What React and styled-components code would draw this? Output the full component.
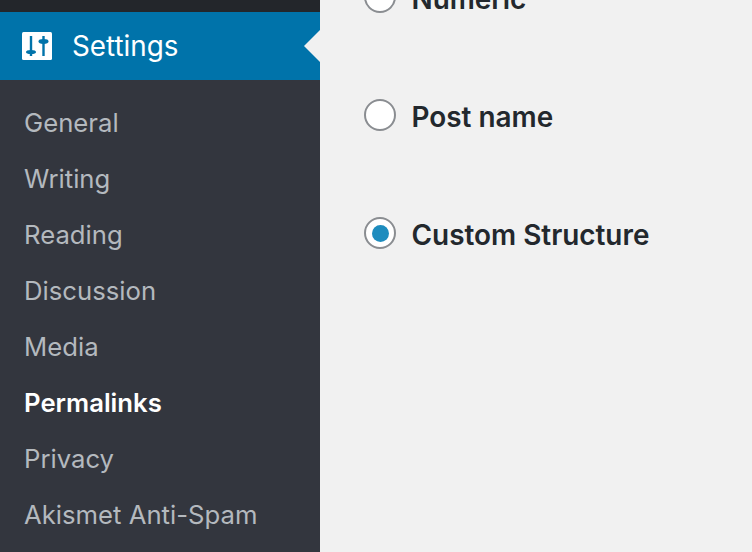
import React from "react";
import styled, { createGlobalStyle } from "styled-components";

const Global = createGlobalStyle`
  html, body { margin: 0; padding: 0; height: 100%; overflow: hidden; background: #f1f1f1; }
  body { font-family: Inter, "Liberation Sans", sans-serif; }
`;

const Page = styled.div`
  display: flex;
  width: 752px;
  height: 552px;
  overflow: hidden;
  background: #f1f1f1;
`;

const Sidebar = styled.nav`
  display: flex;
  flex-direction: column;
  flex: 0 0 320px;
  background: #33363e;
`;

const TopStrip = styled.div`
  height: 12px;
  background: #23262b;
`;

const ActiveItem = styled.div`
  position: relative;
  display: flex;
  align-items: center;
  gap: 20px;
  height: 68px;
  padding-left: 22px;
  background: #0073aa;
  color: #fff;
  font-size: 27.8px;
  line-height: 32px;
  &::after {
    content: "";
    position: absolute;
    right: 0;
    top: 50%;
    margin-top: -16px;
    border: 16px solid transparent;
    border-left-width: 0;
    border-right-color: #f1f1f1;
  }
`;

const SubMenu = styled.ul`
  list-style: none;
  margin: 0;
  padding: 15px 0 0;
`;

const SubItem = styled.li`
  height: 56px;
  padding-left: 24px;
  line-height: 56px;
  font-size: 25.7px;
  font-weight: ${(p) => (p.$current ? 600 : 400)};
  color: ${(p) => (p.$current ? "#fff" : "#b4b9be")};
`;

const Main = styled.main`
  flex: 1;
  padding-left: 44px;
  margin-top: -60px;
`;

const Option = styled.label`
  display: flex;
  align-items: center;
  gap: 15.5px;
  height: 118px;
  font-size: 27.9px;
  font-weight: 600;
  color: #23282d;
`;

const Radio = styled.span`
  display: flex;
  align-items: center;
  justify-content: center;
  box-sizing: border-box;
  flex: 0 0 32px;
  width: 32px;
  height: 32px;
  margin-top: -4px;
  border: 2px solid #8a8d91;
  border-radius: 50%;
  background: #fff;
`;

const Dot = styled.span`
  width: 17px;
  height: 17px;
  border-radius: 50%;
  background: #1e8cbe;
`;

const SettingsIcon = () => (
  <svg width="30" height="28" viewBox="0 0 30 28" aria-hidden="true">
    <rect width="30" height="28" rx="1.5" fill="#fff" />
    <g fill="#0073aa">
      <rect x="7.8" y="4" width="2.4" height="20" />
      <ellipse cx="9" cy="20" rx="5" ry="2" />
      <rect x="20.3" y="4" width="2.4" height="20" />
      <ellipse cx="21.5" cy="9.5" rx="5" ry="2.4" />
    </g>
  </svg>
);

const links = ["General", "Writing", "Reading", "Discussion", "Media", "Permalinks", "Privacy", "Akismet Anti-Spam"];
const options = [
  { label: "Numeric" },
  { label: "Post name" },
  { label: "Custom Structure", checked: true },
];

export default function App() {
  return (
    <Page>
      <Global />
      <Sidebar>
        <TopStrip />
        <ActiveItem>
          <SettingsIcon />
          Settings
        </ActiveItem>
        <SubMenu>
          {links.map((l) => (
            <SubItem key={l} $current={l === "Permalinks"}>{l}</SubItem>
          ))}
        </SubMenu>
      </Sidebar>
      <Main>
        {options.map((o) => (
          <Option key={o.label}>
            <Radio>{o.checked && <Dot />}</Radio>
            {o.label}
          </Option>
        ))}
      </Main>
    </Page>
  );
}
